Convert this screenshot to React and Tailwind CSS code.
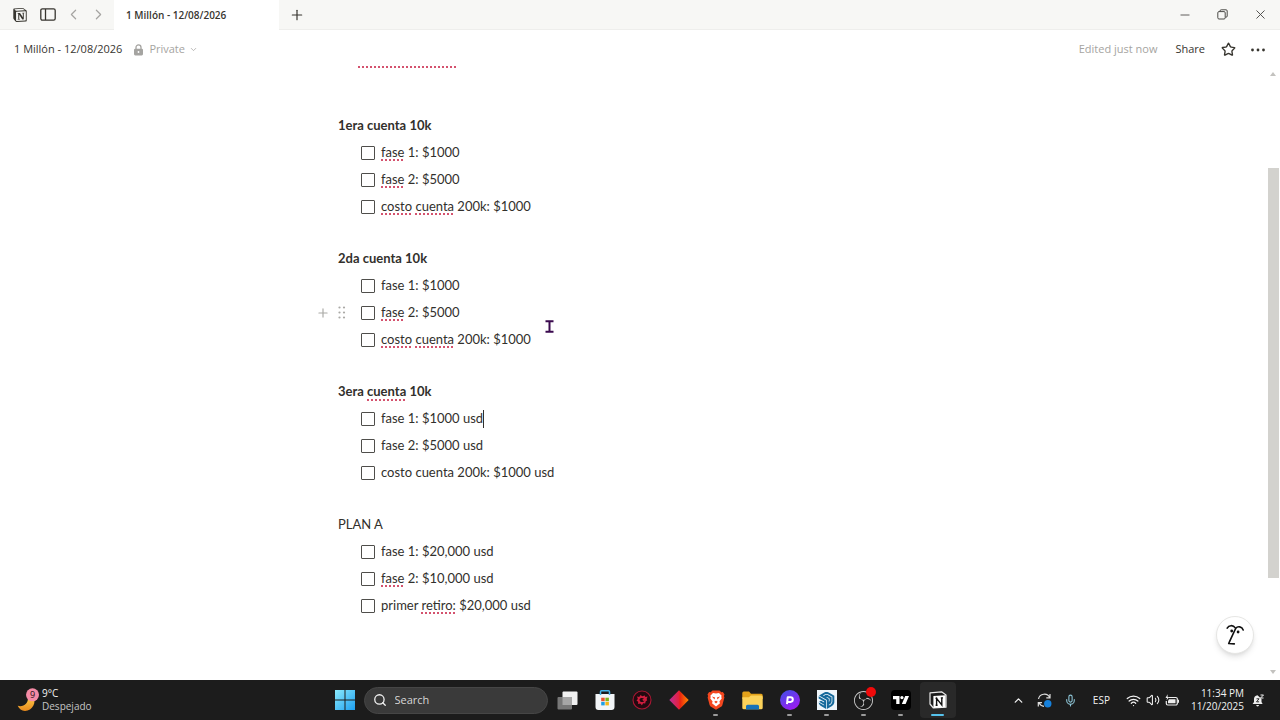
import React, { useState } from 'react';
import { clsx } from 'clsx';
import { ChevronLeft, ChevronRight, ChevronDown, ChevronUp, Plus, Minus, X, Star, Search, Mic, Wifi, Volume2 } from 'lucide-react';
import { SiNotion, SiObsstudio, SiSketchup, SiTradingview } from 'react-icons/si';

// "~" around a word marks it as flagged by the spell checker
const SECTIONS = [
  {
    title: '1era cuenta 10k',
    bold: true,
    items: ['~fase~ 1: $1000', '~fase~ 2: $5000', '~costo~ ~cuenta~ 200k: $1000'],
  },
  {
    title: '2da cuenta 10k',
    bold: true,
    hovered: 1,
    items: ['fase 1: $1000', '~fase~ 2: $5000', '~costo~ ~cuenta~ 200k: $1000'],
  },
  {
    title: '3era ~cuenta~ 10k',
    bold: true,
    caret: 0,
    items: ['fase 1: $1000 usd', 'fase 2: $5000 usd', 'costo cuenta 200k: $1000 usd'],
  },
  {
    title: 'PLAN A',
    items: ['fase 1: $20,000 usd', '~fase~ 2: $10,000 usd', 'primer ~retiro:~ $20,000 usd'],
  },
];

const SpellText = ({ text }) => (
  <>
    {text.split('~').map((part, i) =>
      i % 2 ? (
        <span key={i} className="underline decoration-dotted decoration-2 decoration-[#d4526e] underline-offset-[3px] [text-decoration-skip-ink:none]">
          {part}
        </span>
      ) : (
        <span key={i}>{part}</span>
      )
    )}
  </>
);

const TodoItem = ({ id, text, hovered, caret }) => {
  const [checked, setChecked] = useState(false);

  return (
    <li className="relative flex h-[27px] items-center gap-1.5 pl-[23px]">
      {hovered && (
        <div className="absolute -left-[22px] flex items-center gap-2 text-[#aaa9a6]">
          <button aria-label="Add block"><Plus size={14} strokeWidth={2} /></button>
          <button aria-label="Drag block">
            <svg width="8" height="13" viewBox="0 0 8 13" fill="currentColor">
              {[1.5, 6.5, 11.5].map((y) => (
                <g key={y}>
                  <circle cx="1.5" cy={y} r="1.1" />
                  <circle cx="6" cy={y} r="1.1" />
                </g>
              ))}
            </svg>
          </button>
        </div>
      )}
      <input
        id={id}
        type="checkbox"
        checked={checked}
        onChange={() => setChecked(!checked)}
        className="size-3.5 appearance-none rounded-[1px] border border-[#4f4e4b] bg-white checked:bg-[#2383e2]"
      />
      <label htmlFor={id} className="flex items-center whitespace-pre">
        <span><SpellText text={text} /></span>
        {caret && <span className="h-[18px] w-px bg-[#32302c]" />}
      </label>
    </li>
  );
};

const TitleBar = () => (
  <div className="flex h-[30px] shrink-0 items-stretch bg-[#f7f7f5] text-[#37352f]">
    <div className="flex w-[114px] items-center border-b border-[#eeeeec] pl-[13px]">
      <button aria-label="Notion" className="mr-[13px]"><SiNotion size={14} /></button>
      <button aria-label="Toggle sidebar" className="mr-[9px]">
        <svg width="16" height="13" viewBox="0 0 16 13" fill="none" stroke="currentColor" strokeWidth="1.3">
          <rect x="0.8" y="0.8" width="14.4" height="11.4" rx="1.6" />
          <path d="M5.5 1v11" />
        </svg>
      </button>
      <button aria-label="Back" className="mr-2 text-[#a5a4a1]"><ChevronLeft size={17} strokeWidth={1.7} /></button>
      <button aria-label="Forward" className="text-[#a5a4a1]"><ChevronRight size={17} strokeWidth={1.7} /></button>
    </div>
    <button className="w-[165px] bg-white pt-px pl-3 text-left text-[10px] font-semibold">1 Millón - 12/08/2026</button>
    <div className="flex flex-1 items-center justify-between border-b border-[#eeeeec] pr-3 pl-2.5">
      <button aria-label="New tab"><Plus size={16} strokeWidth={1.8} /></button>
      <div className="flex items-center gap-[25px] text-[#4b4a47]">
        <button aria-label="Minimize"><Minus size={14} strokeWidth={1.5} /></button>
        <button aria-label="Restore">
          <svg width="11" height="11" viewBox="0 0 11 11" fill="none" stroke="currentColor" strokeWidth="1">
            <rect x="0.8" y="2.6" width="7.4" height="7.4" rx="1.2" />
            <path d="M3 2.4V2a1.2 1.2 0 0 1 1.2-1.2H9A1.2 1.2 0 0 1 10.2 2v5A1.2 1.2 0 0 1 9 8.2h-.6" />
          </svg>
        </button>
        <button aria-label="Close"><X size={15} strokeWidth={1.5} /></button>
      </div>
    </div>
  </div>
);

const PageHeader = () => (
  <header className="flex h-9 shrink-0 items-center justify-between px-3.5 pt-[3px] text-[11px] text-[#37352f]">
    <div className="flex items-center">
      <a href="#page" className="mr-3">1 Millón - 12/08/2026</a>
      <button className="flex items-center text-[#a5a4a1]">
        <svg width="9" height="12" viewBox="0 0 9 12" className="mr-1.5">
          <path d="M2 5V3.4a2.500 2.500 0 0 1 5 0V5" fill="none" stroke="currentColor" strokeWidth="1.300" />
          <rect x="0" y="4.800" width="9" height="6.600" rx="1.300" fill="currentColor" />
          <circle cx="4.500" cy="8" r="0.900" fill="#fff" />
        </svg>
        Private
        <ChevronDown size={9} strokeWidth={2} className="ml-1" />
      </button>
    </div>
    <div className="flex items-center">
      <span className="mr-[18px] text-[#a5a4a1]">Edited just now</span>
      <button className="mr-4">Share</button>
      <button aria-label="Favorite" className="mr-3.5"><Star size={15} strokeWidth={2.2} /></button>
      <button aria-label="More">
        <svg width="16" height="4" viewBox="0 0 16 4" fill="currentColor">
          <circle cx="2.500" cy="2" r="1.400" />
          <circle cx="8" cy="2" r="1.400" />
          <circle cx="13.500" cy="2" r="1.400" />
        </svg>
      </button>
    </div>
  </header>
);

const Scrollbar = () => (
  <div className="flex w-3.5 shrink-0 flex-col items-center py-1.5 text-[#c3c2bf]">
    <svg width="6" height="4" viewBox="0 0 6 4" fill="currentColor"><path d="M0 4 3 0l3 4z" /></svg>
    <div className="flex-[92]" />
    <div className="w-[11px] flex-[409] bg-[#d3d2ce]" />
    <div className="flex-[92]" />
    <svg width="6" height="4" viewBox="0 0 6 4" fill="currentColor"><path d="M0 0h6L3 4z" /></svg>
  </div>
);

const Document = () => (
  <main className="relative flex min-h-0 flex-1 overflow-hidden">
    <div className="min-w-0 flex-1">
      <div className="mx-auto max-w-[590px] font-['Lato','Open_Sans',sans-serif] text-[13px] text-[#32302c]">
        <div className="mb-[45px] ml-5 w-[98px] border-b-2 border-dotted border-[#d4526e]" />
        {SECTIONS.map((section, s) => (
          <section key={s} className="mb-[26px]">
            <h2 className={clsx('flex h-[26px] items-center whitespace-pre', section.bold && 'font-bold')}>
              <span><SpellText text={section.title} /></span>
            </h2>
            <ul>
              {section.items.map((text, i) => (
                <TodoItem key={i} id={`todo-${s}-${i}`} text={text} hovered={section.hovered === i} caret={section.caret === i} />
              ))}
            </ul>
          </section>
        ))}
      </div>
    </div>
    <Scrollbar />

    {/* Mouse pointer */}
    <svg className="absolute top-[254px] left-[545px]" width="9" height="13" viewBox="0 0 9 13" fill="none" stroke="#3b0a4f" strokeWidth="2">
      <path d="M0.5 1.2h8M0.5 11.8h8M4.5 1v11" />
    </svg>

    {/* Notion AI */}
    <button aria-label="Notion AI" className="absolute right-[26px] bottom-[26px] flex size-[38px] items-center justify-center rounded-full border border-[#e6e6e4] bg-white shadow-md">
      <svg width="20" height="24" viewBox="0 0 20 24" fill="none" stroke="#111" strokeWidth="1.600" strokeLinecap="round" strokeLinejoin="round">
        <path d="M2.200 5.200C3.800 2.200 8 1.600 10.300 4.900" />
        <path d="M18.200 7C17 3.600 12.800 2.600 10.600 5.600 8.200 10.500 6 15.500 3.700 20.500l5.600.4" />
        <circle cx="6.700" cy="8" r="1.400" fill="#111" stroke="none" />
        <circle cx="13.100" cy="9" r="1.400" fill="#111" stroke="none" />
      </svg>
    </button>
  </main>
);

const WindowsLogo = () => (
  <svg width="20" height="20" viewBox="0 0 20 20">
    <defs>
      <linearGradient id="win" x1="0" y1="0" x2="1" y2="1">
        <stop offset="0" stopColor="#8be9fb" />
        <stop offset="1" stopColor="#1d9ff0" />
      </linearGradient>
    </defs>
    <path fill="url(#win)" d="M0 0h9.5v9.5H0zM10.5 0H20v9.5h-9.5zM0 10.5h9.5V20H0zM10.5 10.5H20V20h-9.5z" />
  </svg>
);

const TaskViewIcon = () => (
  <svg width="21" height="19" viewBox="0 0 21 19">
    <rect x="5.500" y="0.500" width="15" height="13.500" rx="1" fill="#f1f1f1" />
    <rect x="0.500" y="6" width="14.500" height="12.500" rx="1" fill="#777" />
    <path d="M5.500 6H15v8H5.500z" fill="#a6a6a6" />
  </svg>
);

const StoreIcon = () => (
  <svg width="20" height="20" viewBox="0 0 20 20">
    <path d="M0.500 4h19v13a3 3 0 0 1-3 3h-13a3 3 0 0 1-3-3z" fill="#f2f5f7" />
    <path d="M5.500 5V1.800a1 1 0 0 1 1-1h7a1 1 0 0 1 1 1V5" fill="none" stroke="#45b4ea" strokeWidth="1.500" />
    <path d="M6.200 7.700h3.500v3.500H6.200z" fill="#e8502c" />
    <path d="M10.400 7.700h3.500v3.500h-3.500z" fill="#7bb51c" />
    <path d="M6.200 11.900h3.500v3.500H6.200z" fill="#1c9fe4" />
    <path d="M10.400 11.900h3.500v3.500h-3.500z" fill="#f4b617" />
  </svg>
);

const RedGearIcon = () => (
  <svg width="20" height="20" viewBox="0 0 20 20">
    <circle cx="10" cy="10" r="9" fill="#230a10" stroke="#a91733" strokeWidth="1.100" />
    <path d="m5 6.400 2.200.5L8.600 5l1.600 1.300 2.600-.8.6 1.500 2.200-.6-1 2.500.6 1.400-1.600 1.200-.4 2-2-.3-1.300 2-1.600-1.600-2.200.3.1-2.200L4.500 10.400l1.400-1.500z" fill="#cf1d3d" />
    <path d="M7.400 9.400c1-1.600 3.400-1.800 4.600-.6l-1.700.6.9 1.600 1.300-.4c-.7 1.800-3.300 2-4.500.6z" fill="#230a10" />
  </svg>
);

const DiamondIcon = () => (
  <svg width="20" height="20" viewBox="0 0 20 20">
    <defs>
      <linearGradient id="diamond" x1="0" y1="0" x2="1" y2="0">
        <stop offset="0" stopColor="#b8309a" />
        <stop offset="0.500" stopColor="#e51f3c" />
        <stop offset="0.550" stopColor="#e8220f" />
        <stop offset="1" stopColor="#ff8a00" />
      </linearGradient>
    </defs>
    <path d="M10 0.300 19.700 10 10 19.700.3 10z" fill="url(#diamond)" />
  </svg>
);

const BraveIcon = () => (
  <svg width="18" height="20" viewBox="0 0 18 20">
    <path d="M5.500.5h7l1.800 1.700 1.600-.1 1.600 2.300-.6 1.700.5 1.500-2 7.400c-.3 1-1 1.600-1.800 2.100L9 19.800l-4.600-2.700c-.8-.5-1.500-1.100-1.800-2.100L.6 7.600l.5-1.500L.5 4.400l1.600-2.300 1.600.1z" fill="#f4471f" />
    <path d="M9 3.600 12 3l2.700 2.800-.5 1.300.6 1.200-2.400 3.200.6 1.700L9 16.600l-4-3.400.6-1.700-2.400-3.200.6-1.200-.5-1.300L6 3z" fill="#fff" />
    <path d="m4.900 6.600 3.200.8-.6 2.100zM13.100 6.600l-3.200.8.6 2.100zM7.200 11.700 9 10.800l1.800.9L9 13.400z" fill="#f4471f" />
  </svg>
);

const FolderIcon = () => (
  <svg width="21" height="19" viewBox="0 0 21 19">
    <path d="M0.300 2a1.500 1.500 0 0 1 1.500-1.500H7l2 2.300h10.200a1.500 1.500 0 0 1 1.500 1.500V8H.3z" fill="#e3a21a" />
    <path d="M0.300 6.300h6.500L9 4.600h10.200a1.500 1.500 0 0 1 1.500 1.500v10.700a1.500 1.500 0 0 1-1.500 1.500H1.800a1.500 1.500 0 0 1-1.500-1.500z" fill="#fbd25a" />
    <path d="M4 18.500v-3.300a1.500 1.500 0 0 1 1.500-1.500h10a1.500 1.500 0 0 1 1.500 1.500v3.300z" fill="#1872b8" />
  </svg>
);

const PurpleIcon = () => (
  <svg width="20" height="20" viewBox="0 0 20 20">
    <defs>
      <linearGradient id="purple" x1="0" y1="0" x2="0.600" y2="1">
        <stop offset="0" stopColor="#3e52e8" />
        <stop offset="1" stopColor="#9a1cf0" />
      </linearGradient>
    </defs>
    <circle cx="10" cy="10" r="10" fill="url(#purple)" />
    <path d="M7 14.200 7.700 7.300h2.800a2.300 2.300 0 0 1 0 4.600H8.200" fill="none" stroke="#fff" strokeWidth="2" strokeLinejoin="round" />
  </svg>
);

const SketchupIcon = () => (
  <span className="flex size-5 items-center justify-center bg-[#eef5fa] text-[#15699b]"><SiSketchup size={17} /></span>
);

const ObsIcon = () => (
  <span className="relative text-[#c9c9c9]">
    <SiObsstudio size={19} />
    <span className="absolute -top-1 -right-[3px] size-2.5 rounded-full bg-[#f00a0a]" />
  </span>
);

const TradingViewIcon = () => (
  <span className="flex size-5 items-center justify-center rounded-sm bg-black text-white"><SiTradingview size={16} /></span>
);

const NotionIcon = () => (
  <svg width="18" height="18" viewBox="0 0 18 18">
    <path d="M1 1.800 12.600.8 17 4v12.200L4.400 17 1 13z" fill="#1c1c1c" stroke="#e8e8e8" strokeWidth="1.200" strokeLinejoin="round" />
    <path d="M4.400 5 16.500 4.300v12L4.400 17z" fill="#fff" />
    <path d="M7.600 14.200V7.400l5.200 6.500V7M6.500 7.400h2M11.800 6.900h2.200M6.600 14.300h2" fill="none" stroke="#111" strokeWidth="1.400" />
  </svg>
);

const APPS = [
  { name: 'Task view', Icon: TaskViewIcon },
  { name: 'Microsoft Store', Icon: StoreIcon },
  { name: 'Armoury', Icon: RedGearIcon },
  { name: 'Diamond', Icon: DiamondIcon },
  { name: 'Brave', Icon: BraveIcon, running: true },
  { name: 'File Explorer', Icon: FolderIcon },
  { name: 'Player', Icon: PurpleIcon, running: true },
  { name: 'SketchUp', Icon: SketchupIcon, running: true },
  { name: 'OBS Studio', Icon: ObsIcon, running: true },
  { name: 'TradingView', Icon: TradingViewIcon, running: true },
  { name: 'Notion', Icon: NotionIcon, active: true },
];

const Taskbar = () => (
  <footer className="grid h-10 shrink-0 grid-cols-[1fr_auto_1fr] items-center bg-[#1c1c1c] text-[#f2f2f2]">
    <button className="flex items-center gap-[3px] justify-self-start pl-[17px] text-left">
      <svg width="22" height="25" viewBox="0 0 22 25">
        <defs>
          <linearGradient id="moon" x1="0" y1="0" x2="0" y2="1">
            <stop offset="0" stopColor="#ffd04d" />
            <stop offset="1" stopColor="#e98a1c" />
          </linearGradient>
        </defs>
        <path d="M16 8c4 6-.5 15-8 15-3.400 0-6-2.200-7.300-5.200C6 19.500 11.500 16 11 9z" fill="url(#moon)" />
        <circle cx="15.500" cy="6.800" r="6.500" fill="#f58ba6" />
        <text x="15.500" y="10.200" textAnchor="middle" fontSize="9" fill="#2a1218">9</text>
      </svg>
      <span className="text-[10px] leading-[13px]">
        <span className="block">9°C</span>
        <span className="block text-[#c4c4c4]">Despejado</span>
      </span>
    </button>

    <div className="flex items-center gap-px pl-0.5">
      <button aria-label="Start" className="flex h-9 w-9 items-center justify-center"><WindowsLogo /></button>
      <label className="mr-px flex h-[27px] w-[184px] items-center gap-2 rounded-full border border-[#464646] bg-[#3a3a3a] pl-2">
        <Search size={14} strokeWidth={2.2} className="shrink-0" />
        <input type="text" aria-label="Search" placeholder="Search" className="w-full min-w-0 bg-transparent text-[11px] outline-none placeholder:text-[#d6d6d6]" />
      </label>
      {APPS.map(({ name, Icon, running, active }) => (
        <button key={name} aria-label={name} className={clsx('relative flex h-9 w-9 items-center justify-center rounded-sm', active && 'bg-[#292929]')}>
          <Icon />
          {running && <span className="absolute bottom-0.5 h-0.5 w-[5px] rounded-full bg-[#9b9b9b]" />}
          {active && <span className="absolute bottom-0.5 h-0.5 w-[13px] rounded-full bg-[#56c2ec]" />}
        </button>
      ))}
    </div>

    <div className="flex items-center justify-self-end pr-4 text-[10px] whitespace-nowrap">
      <button aria-label="Show hidden icons" className="mr-3"><ChevronUp size={13} strokeWidth={2.4} /></button>
      <button aria-label="Sync" className="mr-3">
        <svg width="15" height="15" viewBox="0 0 15 15" fill="none" stroke="#ddd" strokeWidth="1.200">
          <path d="M1.500 6A6 6 0 0 1 12.800 4.600M13 1v3.800H9.300M7 13.300A6 6 0 0 1 2 9.800M1.300 13.500V9.700H5" />
          <circle cx="10.800" cy="10.800" r="3.700" fill="#1681dc" stroke="none" />
        </svg>
      </button>
      <button aria-label="Microphone" className="mr-4 text-[#8fc7d8]"><Mic size={13} /></button>
      <button className="mr-4">ESP</button>
      <button aria-label="Network, volume and battery" className="mr-3 flex items-center gap-[5px]">
        <Wifi size={15} />
        <Volume2 size={14} strokeWidth={1.8} />
        <svg width="14" height="12" viewBox="0 0 14 12">
          <path d="M3.500 3.500h7.300a1.500 1.500 0 0 1 1.500 1.500v4.500a1.500 1.500 0 0 1-1.500 1.500h-8A1.500 1.500 0 0 1 1.300 9.500V7" fill="none" stroke="#eee" strokeWidth="1.200" />
          <path d="M4 5.200h6.500v4H3V7zM12.800 5.800h1.200v3h-1.200zM2.600.3.5 4h1.600l-.6 2.600L4 3H2.600z" fill="#eee" />
        </svg>
      </button>
      <button className="mr-2 text-right leading-[13px]">
        <span className="block">11:34 PM</span>
        <span className="block">11/20/2025</span>
      </button>
      <button aria-label="Notifications">
        <svg width="12" height="13" viewBox="0 0 12 13">
          <path d="M5.500 1.200C3.200 1.500 2 3.200 2 5v3L.6 10h10L9.500 8V5z" fill="#eee" />
          <path d="M4.200 11h2.800a1.400 1.400 0 0 1-2.800 0z" fill="#eee" />
          <path d="M8.500 1h3L8.500 4h3" fill="none" stroke="#eee" strokeWidth="1" />
          <path d="M4.500 4.800h2.600l-2.600 3h2.600" fill="none" stroke="#1c1c1c" strokeWidth="0.900" />
        </svg>
      </button>
    </div>
  </footer>
);

const App = () => {
  return (
    <div className="flex h-screen flex-col overflow-hidden bg-white font-['Open_Sans','Noto_Sans',sans-serif]">
      <TitleBar />
      <PageHeader />
      <Document />
      <Taskbar />
    </div>
  );
};

export default App;
